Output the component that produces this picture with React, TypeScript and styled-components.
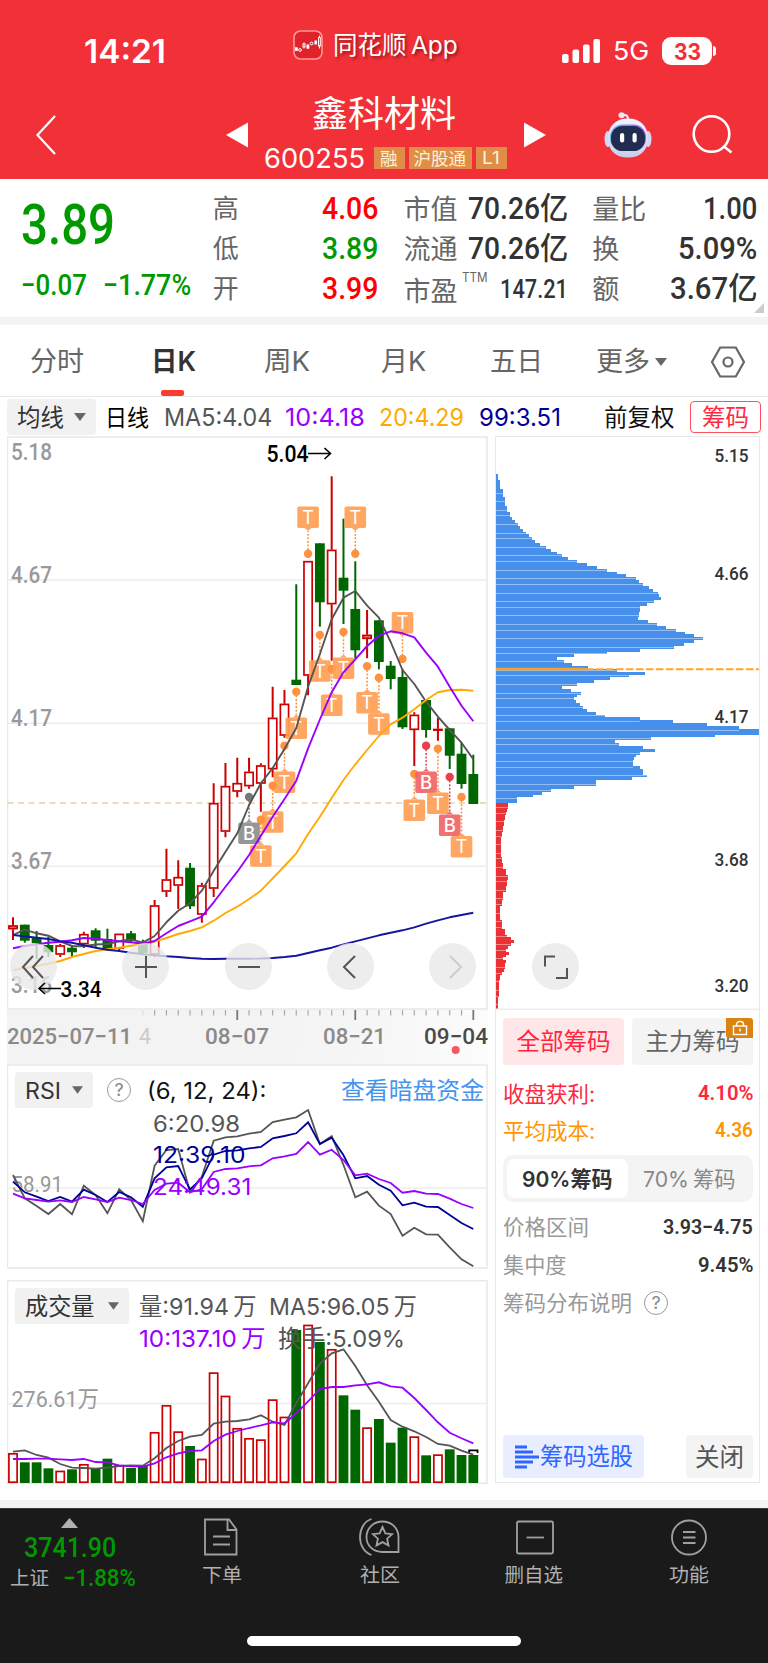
import React, { useLayoutEffect, useRef, useState } from 'react';
import styled, { createGlobalStyle } from 'styled-components';

const CJK = "'Noto Sans CJK SC', sans-serif";
const UI = `Inter, ${CJK}`;
const DIN = `Roboto, ${CJK}`;

const Global = createGlobalStyle`
  * { box-sizing: border-box; }
  body { margin: 0; background: #fff; font-family: ${UI}; }
  svg { display: block; flex: none; }
`;

/* ---------- text that keeps a fixed advance width ---------- */

const FitBox = styled.span<{ $w: number; $size: number; $color?: string; $weight?: number; $din?: boolean; $ml?: number; $dy?: number }>`
  display: block;
  flex: none;
  width: ${(p) => p.$w}px;
  height: ${(p) => Math.round(p.$size * 1.3)}px;
  line-height: ${(p) => Math.round(p.$size * 1.3)}px;
  font-size: ${(p) => p.$size}px;
  font-weight: ${(p) => p.$weight ?? 400};
  font-family: ${(p) => (p.$din ? DIN : UI)};
  color: ${(p) => p.$color ?? 'inherit'};
  margin-left: ${(p) => p.$ml ?? 0}px;
  margin-top: ${(p) => 2 * (p.$dy ?? 0)}px;
  white-space: nowrap;
`;
const FitInner = styled.span`
  display: inline-block;
  transform-origin: 0 50%;
`;

type FitProps = { w: number; size: number; color?: string; weight?: number; din?: boolean; ml?: number; dy?: number; children: React.ReactNode };

function Fit({ w, size, color, weight, din, ml, dy, children }: FitProps) {
  const ref = useRef<HTMLSpanElement>(null);
  const [scale, setScale] = useState(1);
  useLayoutEffect(() => {
    if (ref.current) setScale(w / ref.current.offsetWidth);
  }, [w, size]);
  return (
    <FitBox $w={w} $size={size} $color={color} $weight={weight} $din={din} $ml={ml} $dy={dy}>
      <FitInner ref={ref} style={{ transform: `scaleX(${scale})` }}>{children}</FitInner>
    </FitBox>
  );
}

/* ---------- header ---------- */

const Page = styled.div`
  width: 768px;
  height: 1663px;
  display: flex;
  flex-direction: column;
  background: #fff;
`;
const Header = styled.header`
  height: 179px;
  background: #f23038;
  color: #fff;
`;
const StatusBar = styled.div`
  height: 90px;
  display: flex;
  align-items: center;
  padding: 12px 0 0 84px;
`;
const AppTag = styled.div`
  display: flex;
  align-items: center;
  width: 168px;
  margin: -12px 101px 0 127px;
  gap: 10px;
  text-shadow: 2px 2px 3px rgba(90, 0, 0, 0.6);
`;
const Battery = styled.div`
  position: relative;
  width: 50px;
  height: 28px;
  margin-left: 13px;
  border-radius: 9px;
  background: #fff;
  color: #f23038;
  display: flex;
  align-items: center;
  justify-content: center;
  &::after {
    content: '';
    position: absolute;
    left: 51px;
    top: 9px;
    width: 3px;
    height: 10px;
    border-radius: 0 4px 4px 0;
    background: #fff;
  }
`;
const TitleBar = styled.div`
  height: 89px;
  display: flex;
  align-items: center;
  padding-left: 36px;
`;
const TitleNav = styled.div`
  display: flex;
  align-items: center;
  margin: 0 58px 0 170px;
`;
const Actions = styled.div`
  display: flex;
  align-items: center;
  gap: 40px;
`;
const TitleBlock = styled.div`
  width: 246px;
  margin: 0 16px 0 14px;
  display: flex;
  flex-direction: column;
  align-items: center;
`;
const CodeRow = styled.div`
  display: flex;
  align-items: center;
  height: 24px;
  margin: 3px 0 -3px;
  gap: 4px;
`;
const TitleText = styled.div`
  margin: -11px 2px 5px 0;
`;
const Code = styled.div`
  margin-right: 5px;
`;
const Badge = styled.span<{ $w: number }>`
  width: ${(p) => p.$w}px;
  height: 22px;
  display: flex;
  align-items: center;
  justify-content: center;
  background: #e08d47;
  color: #fff1d8;
`;

const AppIcon = () => (
  <svg width="30" height="30" viewBox="0 0 30 30">
    <rect x="1" y="1" width="28" height="28" rx="6.5" fill="#e0232b" stroke="#f99" strokeWidth="1.6" />
    <g stroke="#fff" strokeWidth="1" fill="none">
      <rect x="2.4" y="17.8" width="1.8" height="2.6" fill="#fff" /><circle cx="7" cy="20" r="1.4" /><path d="M11 12.500v1.500M11 17v1.500" />
      <rect x="10" y="14" width="2" height="3" /><rect x="14" y="15" width="1.800" height="3.2" fill="#fff" /><circle cx="18.600" cy="13.500" r="1.4" />
      <rect x="22" y="11" width="1.4" height="3" fill="#fff" /><rect x="25.500" y="7.500" width="1.800" height="8.500" /><path d="M26.500 5.500v2M26.500 16v2.500" />
    </g>
  </svg>
);
const Signal = () => (
  <svg width="38" height="24" viewBox="0 0 38 24" fill="#fff">
    <rect x="0" y="15" width="6.6" height="9" rx="2" /><rect x="10.5" y="10.5" width="6.6" height="13.5" rx="2" />
    <rect x="21" y="5.5" width="6.6" height="18.5" rx="2" /><rect x="31.4" y="0" width="6.6" height="24" rx="2" />
  </svg>
);
const BackIcon = () => (
  <svg width="20" height="40" viewBox="0 0 20 40" fill="none" stroke="#fff" strokeWidth="2.2"><path d="M19 1 1.5 20 19 39" /></svg>
);
const Arrow = ({ flip }: { flip?: boolean }) => (
  <svg width="22" height="26" viewBox="0 0 22 26" fill="#fff"><path d={flip ? 'M0 .5 22 13 0 25.5z' : 'M22 .5 0 13l22 12.5z'} /></svg>
);
const Robot = () => (
  <svg width="48" height="46" viewBox="0 0 48 46">
    <defs>
      <linearGradient id="shell" x1="0" y1="0" x2="0" y2="1"><stop offset="0" stopColor="#f3f4ff" /><stop offset="1" stopColor="#c9cdec" /></linearGradient>
      <linearGradient id="rim" x1="0" y1="0" x2="1" y2="0"><stop offset="0" stopColor="#62b8e8" /><stop offset="1" stopColor="#a25be8" /></linearGradient>
    </defs>
    <path d="M18 3c4-.6 6 .5 6 4" fill="none" stroke="#e4e5f8" strokeWidth="2.2" />
    <circle cx="17.5" cy="3.2" r="3" fill="#f4e3f0" />
    <ellipse cx="4" cy="27" rx="3.5" ry="8" fill="#d4d7f2" /><ellipse cx="44" cy="27" rx="3.5" ry="8" fill="#d4d7f2" />
    <path d="M24 6.500C36 6.500 44 14 44 26 44 38 37 45.500 24 45.500S4 38 4 26C4 14 12 6.500 24 6.500z" fill="url(#shell)" />
    <rect x="6" y="12.500" width="36" height="26.500" rx="12.500" fill="url(#rim)" />
    <rect x="7" y="14" width="34" height="25" rx="11.500" fill="#202d51" />
    <rect x="16" y="21" width="4.200" height="9.500" rx="2.100" fill="#fff" /><rect x="28.500" y="21" width="4.200" height="9.500" rx="2.100" fill="#fff" />
  </svg>
);
const SearchIcon = () => (
  <svg width="42" height="42" viewBox="0 0 42 42" fill="none" stroke="#fff" strokeWidth="2.600"><circle cx="19.500" cy="20" r="17.800" /><path d="m32 32.500 7.500 6" /></svg>
);

/* ---------- quote summary ---------- */

const Quote = styled.section`
  height: 138px;
  display: flex;
  padding: 10px 11px 0 21px;
  position: relative;
`;
const PriceCol = styled.div`
  width: 192px;
`;
const Changes = styled.div`
  display: flex;
  gap: 16px;
  margin-top: 5px;
`;
const StatCol = styled.div<{ $w: number; $ml?: number }>`
  width: ${(p) => p.$w}px;
  margin-left: ${(p) => p.$ml ?? 0}px;
`;
const StatRow = styled.div`
  height: 40px;
  display: flex;
  align-items: center;
  justify-content: space-between;
  color: #666;
`;
const Pair = styled.div`
  display: flex;
  align-items: center;
`;
const Corner = styled.svg`
  position: absolute;
  right: 4px;
  bottom: 4px;
`;
const Strip = styled.div`
  height: 8px;
  background: #f4f4f4;
`;

/* ---------- tabs and MA toolbar ---------- */

const Tabs = styled.nav`
  height: 72px;
  display: flex;
  align-items: center;
  padding: 2px 0 0 30px;
  border-bottom: 1px solid #eaeaea;
  color: #666;
`;
const Tab = styled.div<{ $ml?: number }>`
  position: relative;
  display: flex;
  margin-left: ${(p) => p.$ml ?? 0}px;
`;
const Underline = styled.i`
  position: absolute;
  left: 10px;
  top: 46px;
  width: 23px;
  height: 6px;
  border-radius: 2px;
  background: #ff3b30;
`;
const More = styled.div`
  display: flex;
  align-items: center;
  gap: 5px;
  margin: 0 43px 0 53px;
`;
const MaBar = styled.div`
  height: 39px;
  display: flex;
  align-items: center;
  padding: 1px 0 0 7px;
`;
const Chip = styled.div<{ $w: number }>`
  width: ${(p) => p.$w}px;
  height: 36px;
  flex: none;
  padding: 0 10px 0 10px;
  display: flex;
  align-items: center;
  justify-content: space-between;
  background: #f1f1f1;
  border-radius: 4px;
  color: #333;
`;
const OutlineBtn = styled.div`
  width: 71px;
  height: 32px;
  margin-left: 15px;
  display: flex;
  align-items: center;
  justify-content: center;
  border: 1.500px solid #ff5060;
  border-radius: 4px;
`;
const Caret = ({ w = 12 }: { w?: number }) => (
  <svg width={w} height="8" viewBox="0 0 12 8" fill="#666"><path d="M0 0h12L6 8z" /></svg>
);

/* ---------- chart area ---------- */

const Body = styled.main`
  height: 1064px;
  display: flex;
  gap: 7px;
  padding-left: 7px;
`;
const Left = styled.div`
  width: 481px;
  display: flex;
  flex-direction: column;
`;
const Panel = styled.section<{ $h: number; $mt?: number }>`
  position: relative;
  height: ${(p) => p.$h}px;
  margin-top: ${(p) => p.$mt ?? 0}px;
  flex: none;
`;
const Overlay = styled.div`
  position: absolute;
  left: 0;
  right: 0;
  top: 0;
  padding: 8px 0 0 8px;
`;
const Line = styled.div<{ $h?: number; $pl?: number }>`
  display: flex;
  align-items: center;
  height: ${(p) => p.$h ?? 36}px;
  padding-left: ${(p) => p.$pl ?? 0}px;
`;
const Axis = styled.div`
  height: 54px;
  background: linear-gradient(100deg, #f3f3f3 0 45%, #f5f5f5 70%, #fcfcfc 100%);
`;
const RoundRow = styled.div`
  position: absolute;
  left: 3px;
  top: 507px;
  display: flex;
`;
const Round = styled.div<{ $ml?: number }>`
  width: 47px;
  height: 47px;
  margin-left: ${(p) => p.$ml ?? 0}px;
  border-radius: 50%;
  display: flex;
  align-items: center;
  justify-content: center;
  background: rgba(232, 232, 232, 0.8);
`;
const Right = styled.aside`
  width: 265px;
  height: 1047px;
  display: flex;
  flex-direction: column;
  border: solid #e8e8e8;
  border-width: 1px 1px 1.500px 1px;
  position: relative;
`;

const X0 = 13;
const STEP = 11.803;
const cx = (i: number) => X0 + i * STEP;
const RED = '#cc0000';
const GREEN = '#006600';
const GREY = '#555';
const PURPLE = '#9900ff';
const AMBER = '#ffaa00';
const NAVY = '#000099';

const poly = (v: number[], f: (y: number) => number = (y) => y) =>
  v.map((y, i) => `${cx(i).toFixed(1)},${f(y).toFixed(1)}`).join(' ');

/* [rising, high, body top, body bottom, low] */
const CANDLES: [number, number, number, number, number][] = [
  [1, 917.3, 925.3, 929.3, 940], [0, 924.7, 924.7, 940.7, 942.7], [0, 931, 938, 943.5, 959], [0, 936.7, 945, 952.3, 957],
  [1, 944, 945.3, 954.7, 957], [0, 945.3, 947.7, 952.3, 957], [1, 931.7, 934, 944.3, 948], [0, 928.3, 930.3, 940.7, 947.7],
  [0, 928.7, 939, 949.3, 950.7], [1, 933.7, 933.7, 948.7, 950.7], [0, 931, 933.3, 940.7, 942.7], [0, 939.7, 942.7, 953, 955],
  [1, 900, 905.3, 954.7, 957], [1, 848.7, 879.3, 891.7, 897], [1, 860.3, 877, 885.7, 909], [0, 863, 867.7, 906.3, 909],
  [1, 882.7, 885.3, 914.7, 922.7], [1, 783.3, 803, 888.7, 897], [1, 763, 786, 831.7, 837.3], [1, 757.7, 783, 791.7, 797.3],
  [1, 757.7, 771.7, 786.3, 788.7], [1, 763.3, 765.3, 783.7, 811.7], [1, 686.7, 717.7, 769.3, 777.3], [1, 690, 703.7, 735.7, 737.7],
  [0, 584.3, 679.7, 685, 685], [1, 561, 561, 675.7, 695.3], [0, 543.3, 543.3, 602.3, 626.7], [1, 476.3, 549.7, 604.3, 660.7],
  [0, 518.7, 577.7, 590.7, 624], [0, 561.3, 609, 650.3, 658.3], [1, 610, 634.7, 639, 658.3], [0, 620.3, 620.3, 662, 669.3],
  [0, 661, 665.7, 679, 689.3], [0, 669, 677, 727.3, 729], [1, 712.3, 714.7, 730, 766], [0, 700, 700, 730, 737.7],
  [1, 717.7, 728.8, 729.8, 740.7], [0, 728.3, 728.3, 755.7, 769], [0, 742.7, 753.7, 784, 788.7], [0, 754.7, 774, 804, 804],
];
const MA5 = [935, 929.7, 933.3, 935.7, 941.3, 946, 946.3, 944.5, 944, 941.3, 939.3, 942.7, 936, 922.3, 910.7, 903.3, 890.7, 870.7, 851.7, 833.3, 805, 783.3, 768, 749, 728, 686.7, 654, 619.3, 597.7, 591, 605.7, 617.7, 642, 670, 684, 701.7, 716.7, 730, 742.7, 759.3];
const MA10 = [948.3, 946, 944.3, 942.7, 941.7, 940.3, 938, 938.7, 940, 941.3, 942.3, 943.7, 941, 933.3, 926, 921.3, 916.7, 902.3, 886.7, 871.7, 855, 835.7, 816.7, 799, 780.7, 748.3, 719.5, 692.3, 672.3, 659.3, 646, 635.7, 631.3, 633.3, 637.3, 652.7, 666.7, 686.7, 705.7, 721.3];
const MA20 = [970, 968, 966, 963.7, 961, 957, 954, 951, 949.3, 947.7, 945.7, 944, 941.7, 938, 934, 931, 927.3, 920.7, 913, 906.7, 899, 890.7, 878.3, 866, 853.3, 834, 816.7, 798, 780, 764.3, 750, 736, 724.3, 717.7, 709.3, 700, 692.3, 690, 689.7, 690.7];
const MA99 = [935, 936.3, 937.7, 939, 941.3, 942.7, 945.3, 947.7, 949.7, 951, 952.7, 954.3, 955.3, 956.3, 957, 958, 958.7, 959, 958.7, 958.7, 958.7, 958.5, 958, 957, 955.7, 953, 950.3, 947.7, 944.3, 941.3, 938.3, 935.3, 932.7, 930.3, 927.3, 923.7, 920.3, 917.3, 915, 912.7];

/* [candle index, dot y, box centre y, letter, tone] */
const MARKS: [number, number, number, string, 'o' | 'r' | 'g'][] = [
  [25, 553.7, 517.3, 'T', 'o'], [29, 553.7, 517.3, 'T', 'o'], [26, 635, 671, 'T', 'o'], [27, 669, 705.3, 'T', 'o'], [28, 632, 668.3, 'T', 'o'],
  [30, 666.3, 702.7, 'T', 'o'], [31, 677.7, 724, 'T', 'o'], [33, 659, 622.7, 'T', 'o'], [24, 691.7, 728.3, 'T', 'o'],
  [23, 745.7, 782.3, 'T', 'o'], [22, 785.7, 822, 'T', 'o'], [21, 819.7, 856, 'T', 'o'], [20, 797, 833.3, 'B', 'g'],
  [34, 774, 810.3, 'T', 'o'], [35, 745.7, 782.3, 'B', 'r'], [36, 748.7, 803.3, 'T', 'o'], [37, 777, 825.3, 'B', 'r'], [38, 797, 846.7, 'T', 'o'],
];
const TONES = { o: ['#ff923e', '#ffa055'], r: ['#e9404f', '#f06468'], g: ['#777', '#8e8e8e'] };

type TProps = { x: number; y: number; w: number; size: number; fill: string; weight?: number; children: string };
const T = ({ x, y, w, size, fill, weight = 400, children }: TProps) => (
  <text x={x} y={y} fontFamily={DIN} fontSize={size} fontWeight={weight} fill={fill} textLength={w} lengthAdjust="spacingAndGlyphs">{children}</text>
);

function Kline() {
  return (
    <svg width="481" height="574" viewBox="7 436 481 574">
      <rect x="7.500" y="437" width="479.500" height="572" fill="#fff" stroke="#e9e9e9" strokeWidth="1.600" />
      {[580, 723.3, 866.3].map((y) => <path key={y} d={`M8 ${y}H486`} stroke="#ededed" strokeWidth="1.400" />)}
      <path d="M7.500 803H486" stroke="#e6cdaa" strokeWidth="1.400" strokeDasharray="6 4.500" />
      <T x={11} y={460} w={41} size={23.500} fill="#999" weight={500}>5.18</T>
      <T x={11} y={583} w={41} size={23.500} fill="#999" weight={500}>4.67</T>
      <T x={11} y={726} w={41} size={23.500} fill="#999" weight={500}>4.17</T>
      <T x={11} y={869} w={41} size={23.500} fill="#999" weight={500}>3.67</T>
      <T x={11} y={993} w={41} size={23.500} fill="#999" weight={500}>3.16</T>
      {CANDLES.map(([up, h, t, b, l], i) => {
        const x = cx(i);
        const c = up ? RED : GREEN;
        return (
          <g key={i} stroke={c}>
            <path d={up ? `M${x} ${h}V${t}M${x} ${b}V${l}` : `M${x} ${h}V${l}`} strokeWidth="2" />
            {up ? <rect x={x - 4.1} y={t + 0.7} width="8.200" height={Math.max(b - t - 1.4, 0.6)} fill={i === 0 || i === 30 ? '#e88' : '#fff'} strokeWidth="1.700" />
              : <rect x={x - 4.9} y={t} width="9.800" height={b - t} fill={c} stroke="none" />}
          </g>
        );
      })}
      {MARKS.map(([i, dot, box, s, tone]) => {
        const x = cx(i);
        const above = box < dot;
        const edge = above ? box + 10.7 : box - 10.7;
        const tip = above ? edge + 3 : edge - 3;
        const [d, f] = TONES[tone];
        return (
          <g key={i}>
            <path d={`M${x} ${dot}V${tip}`} stroke={d} strokeWidth="1.500" strokeDasharray="2 1.600" />
            <circle cx={x} cy={dot} r="4.200" fill={d} />
            <g opacity=".92">
              <rect x={x - 10.8} y={box - 10.8} width="21.600" height="21.600" rx="1.800" fill={f} />
              <path d={`M${x - 3.500} ${edge}L${x} ${tip}L${x + 3.500} ${edge}z`} fill={f} />
            </g>
            <text x={x} y={box + 6.6} textAnchor="middle" fontFamily={UI} fontSize="18.500" fill="#fff" fontWeight={s === 'B' ? 500 : 400}>{s}</text>
          </g>
        );
      })}
      <g fill="none" strokeWidth="1.900" strokeLinejoin="round">
        <polyline points={poly(MA5)} stroke={GREY} />
        <polyline points={poly(MA20)} stroke={AMBER} />
        <polyline points={poly(MA10)} stroke={PURPLE} />
        <polyline points={poly(MA99)} stroke="#1515a0" />
      </g>
      <T x={266.500} y={462} w={42} size={24} fill="#000" weight={500}>5.04</T>
      <path d="M308 453.500H330M324.500 448l6 5.500-6 5.500" fill="none" stroke="#000" strokeWidth="1.600" />
    </svg>
  );
}

function AxisTicks() {
  return (
    <svg width="481" height="54" viewBox="7 1010 481 54">
      {Array.from({ length: 29 }, (_, k) => k + 11).map((i) => {
        const major = i === 19 || i === 29 || i === 39;
        return <path key={i} d={`M${cx(i)} 1010v${major ? 10 : 5.500}`} stroke={major ? '#777' : '#aaa'} strokeWidth={major ? 1.8 : 1.2} opacity={i === 11 ? 0.3 : 1} />;
      })}
      <T x={7} y={1044} w={125} size={22.500} fill="#8a8a8a" weight={500}>2025−07−11</T>
      <T x={139} y={1044} w={12} size={22.500} fill="#ccc">4</T>
      <T x={205} y={1044} w={64} size={22.500} fill="#8a8a8a" weight={500}>08−07</T>
      <T x={323} y={1044} w={63} size={22.500} fill="#8a8a8a" weight={500}>08−21</T>
      <T x={424} y={1044} w={64} size={22.500} fill="#4a4a4a" weight={500}>09−04</T>
      <circle cx="455.700" cy="1050" r="4" fill="#f25a5e" />
    </svg>
  );
}

/* RSI values, in thirds of a pixel below the top of the scale */
const RSI6 = [375, 445, 468, 492, 462, 493, 407, 435, 490, 418, 450, 514, 347, 300, 297, 427, 380, 272, 262, 259, 251, 246, 216, 209, 202, 180, 282, 258, 345, 442, 425, 467, 492, 557, 533, 553, 554, 592, 628, 649];
const RSI12 = [395, 427, 440, 453, 441, 455, 419, 435, 456, 426, 442, 470, 385, 352, 348, 418, 385, 314, 303, 301, 295, 291, 265, 258, 250, 217, 282, 263, 316, 385, 378, 404, 422, 466, 458, 470, 471, 495, 519, 537];
const RSI24 = [431, 445, 450, 455, 451, 456, 441, 448, 456, 443, 450, 462, 420, 401, 398, 427, 418, 366, 357, 355, 349, 346, 325, 319, 312, 276, 314, 299, 330, 376, 371, 387, 399, 428, 423, 431, 432, 446, 462, 474];

function RsiChart() {
  const f = (y: number) => 1050 + y / 3;
  return (
    <svg width="481" height="205" viewBox="7 1064 481 205">
      <rect x="7.500" y="1065" width="479.500" height="203" fill="#fff" stroke="#e9e9e9" strokeWidth="1.600" />
      <path d="M8 1188H486" stroke="#ededed" strokeWidth="1.400" />
      <T x={11.500} y={1191.500} w={51.500} size={22.500} fill="#999">58.91</T>
      <g fill="none" strokeWidth="1.800">
        <polyline points={poly(RSI6, f)} stroke={GREY} />
        <polyline points={poly(RSI12, f)} stroke={NAVY} />
        <polyline points={poly(RSI24, f)} stroke={PURPLE} />
      </g>
    </svg>
  );
}

const VOL: [number, number][] = [
  [1, 549], [0, 577], [0, 577], [0, 595], [1, 602], [0, 598], [1, 582], [0, 594], [0, 566], [1, 585], [0, 594], [0, 586], [1, 486], [1, 405],
  [1, 484], [0, 528], [1, 566], [1, 307], [1, 377], [1, 474], [1, 504], [1, 508], [1, 388], [1, 440], [0, 180], [1, 164], [0, 216], [1, 237],
  [0, 376], [0, 419], [1, 472], [0, 447], [0, 518], [0, 473], [1, 499], [0, 556], [1, 553], [0, 538], [0, 555], [0, 555],
];
const V5 = [545, 541, 555, 563, 582, 593, 594, 596, 593, 588, 586, 587, 565, 534, 513, 500, 495, 461, 455, 453, 448, 436, 455, 465, 400, 340, 281, 250, 238, 288, 346, 395, 450, 470, 484, 501, 522, 527, 542, 554];
const V10 = [567, 567, 566, 566, 568, 570, 567, 576, 577, 586, 589, 590, 580, 562, 550, 543, 541, 513, 494, 483, 474, 466, 457, 460, 430, 394, 357, 351, 351, 346, 343, 337, 349, 353, 384, 420, 457, 488, 505, 520];

function VolumeChart() {
  const f = (y: number) => 1270 + y / 3;
  return (
    <svg width="481" height="204" viewBox="7 1280 481 204">
      <rect x="7.500" y="1280.700" width="479.500" height="202.500" fill="#fff" stroke="#e9e9e9" strokeWidth="1.600" />
      <path d="M8 1403.500H486" stroke="#ededed" strokeWidth="1.400" />
      <T x={11.500} y={1406.500} w={87.500} size={22.500} fill="#999">276.61万</T>
      {VOL.map(([up, v], i) => {
        const x = cx(i);
        const t = f(v);
        return up ? <rect key={i} x={x - 4.1} y={t + 0.8} width="8.200" height={1482.2 - t - 0.8} fill="#fff" stroke={RED} strokeWidth="1.700" />
          : <rect key={i} x={x - 4.9} y={t} width="9.800" height={1483 - t} fill={GREEN} />;
      })}
      <path d="M469.200 1453v-2.700h8.300v2.700" fill="none" stroke="#000" strokeWidth="1.800" />
      <g fill="none" strokeWidth="1.800">
        <polyline points={poly(V5, f)} stroke={GREY} />
        <polyline points={poly(V10, f)} stroke={PURPLE} />
      </g>
    </svg>
  );
}

/* cost distribution outline: [depth, extent], three units per pixel */
const CHIPS: [number, number][] = [
  [137, 29], [146, 31], [163, 36], [189, 44], [214, 50], [240, 58], [258, 65], [266, 73], [275, 81], [284, 90], [292, 97], [300, 106], [309, 114], [318, 123], [327, 131],
  [336, 140], [344, 157], [352, 173], [361, 189], [369, 206], [378, 222], [387, 240], [395, 268], [404, 297], [412, 326], [421, 356], [430, 386], [438, 415], [447, 445],
  [456, 452], [464, 466], [473, 482], [481, 496], [490, 509], [499, 514], [508, 520], [516, 498], [525, 477], [533, 455], [559, 453], [569, 451], [576, 479], [585, 507],
  [594, 535], [602, 563], [612, 590], [621, 617], [630, 646], [638, 617], [646, 587], [655, 557], [663, 457], [672, 358], [681, 257], [690, 207], [699, 228], [707, 252],
  [716, 300], [724, 386], [733, 472], [741, 422], [750, 367], [759, 317], [767, 268], [776, 222], [784, 249], [794, 279], [802, 268], [810, 257], [818, 265], [827, 275],
  [836, 286], [845, 296], [853, 323], [862, 352], [871, 455], [879, 556], [888, 656], [896, 754], [906, 815], [915, 680], [923, 490], [932, 380], [941, 392], [949, 428],
  [957, 464], [966, 502], [974, 457], [983, 444], [991, 438], [1000, 435], [1009, 435], [1017, 455], [1026, 466], [1035, 477], [1043, 432], [1052, 380], [1060, 325],
  [1070, 258], [1078, 190], [1086, 163], [1095, 135], [1103, 108], [1112, 87], [1121, 61], [1129, 59], [1138, 56], [1147, 53], [1160, 52], [1186, 49], [1195, 45],
  [1212, 41], [1240, 38], [1270, 38], [1290, 41], [1310, 46], [1330, 54], [1344, 61], [1358, 58], [1380, 53], [1400, 44], [1420, 41], [1438, 36], [1460, 37], [1490, 41],
  [1507, 50], [1516, 58], [1524, 68], [1534, 77], [1542, 68], [1551, 59], [1560, 55], [1568, 62], [1577, 54], [1586, 46], [1594, 53], [1607, 52], [1620, 48], [1630, 41],
  [1640, 36], [1660, 34], [1690, 32], [1720, 30], [1740, 29],
];
const PITCH = 8.575;
const extentAt = (y: number) => {
  let best = CHIPS[0];
  for (const c of CHIPS) if (Math.abs(c[0] - y) < Math.abs(best[0] - y)) best = c;
  return best[1];
};

function Distribution() {
  const rows = Array.from({ length: 187 }, (_, k) => k - 6);
  return (
    <svg width="263" height="573" viewBox="496 437 263 573">
      <g shapeRendering="crispEdges">
        {rows.map((k) => {
          const y = 189 + k * PITCH;
          const w = (extentAt(y + 1) - 24) / 3;
          const py = 430 + (y - PITCH / 2) / 3;
          return <rect key={k} x="496" y={py} width={w} height={PITCH / 3} fill={y < 1117 ? '#4690ec' : '#ea3236'} />;
        })}
      </g>
      {rows.filter((k) => k >= 0 && [0, 3, 6].includes(k % 8)).map((k) => {
        const y = 189 + k * PITCH;
        return <rect key={k} x="496" y={Math.round(430 + y / 3 - 0.5)} width={(extentAt(y) - 24) / 3} height="1" fill="#fff" opacity=".42" />;
      })}
      <path d="M496 669H586" stroke="#ff9f1f" strokeWidth="2.400" />
      <path d="M586 669.300H759" stroke="#ffa528" strokeWidth="2" strokeDasharray="7.500 2.500" />
      <T x={714.500} y={462.200} w={34} size={19} fill="#333" weight={500}>5.15</T>
      <T x={714.500} y={579.700} w={34} size={19} fill="#333" weight={500}>4.66</T>
      <T x={714.500} y={723.300} w={34} size={19} fill="#333" weight={500}>4.17</T>
      <T x={714.500} y={866.300} w={34} size={19} fill="#333" weight={500}>3.68</T>
      <T x={714.500} y={991.700} w={34} size={19} fill="#333" weight={500}>3.20</T>
      <path d="M496 1009.300H759" stroke="#ededed" strokeWidth="1.400" />
    </svg>
  );
}

const Glyph = ({ d, dim }: { d: string; dim?: boolean }) => (
  <svg width="26" height="26" viewBox="0 0 26 26" fill="none" stroke={dim ? '#ccc' : '#555'} strokeWidth="2"><path d={d} /></svg>
);
const Floating = styled.div`
  position: absolute;
  left: 36px;
  top: 506px;
`;
const LowTag = styled.svg`
  position: absolute;
  left: 30px;
  top: 540px;
`;
const Help = styled.span<{ $ml: number }>`
  width: 24px;
  height: 24px;
  flex: none;
  margin-left: ${(p) => p.$ml}px;
  border: 1.600px solid #999;
  border-radius: 50%;
  display: flex;
  align-items: center;
  justify-content: center;
  font: 500 17.5px/1 ${UI};
  color: #909090;
`;

/* ---------- side panel ---------- */

const Side = styled.div`
  flex: 1;
  display: flex;
  flex-direction: column;
  padding: 8px 6px 4px 7px;
`;
const Row = styled.div<{ $h: number; $mt?: number }>`
  display: flex;
  align-items: center;
  justify-content: space-between;
  height: ${(p) => p.$h}px;
  margin-top: ${(p) => p.$mt ?? 0}px;
`;
const BottomRow = styled(Row)`
  margin-top: auto;
`;
const Btn = styled.div<{ $w: number; $h: number; $bg: string }>`
  position: relative;
  width: ${(p) => p.$w}px;
  height: ${(p) => p.$h}px;
  display: flex;
  align-items: center;
  justify-content: center;
  gap: 1px;
  border-radius: 4px;
  background: ${(p) => p.$bg};
`;
const LockBadge = styled.span`
  position: absolute;
  right: 0;
  top: 0;
  width: 27px;
  height: 20px;
  border-radius: 0 3px 0 3px;
  background: #db820f;
  display: flex;
  align-items: center;
  justify-content: center;
`;
const Segment = styled.div`
  height: 47px;
  margin-top: 6px;
  padding: 4px;
  display: flex;
  border-radius: 10px;
  background: #f4f4f4;
`;
const SegItem = styled.div<{ $on?: boolean }>`
  width: 121px;
  height: 39px;
  display: flex;
  align-items: center;
  justify-content: center;
  border-radius: 8px;
  background: ${(p) => (p.$on ? '#fff' : 'transparent')};
`;

/* ---------- bottom bar ---------- */

const Footer = styled.footer`
  height: 155px;
  background: #1a1a1a;
  border-top: 1px solid #3c3c3c;
  display: flex;
  flex-direction: column;
`;
const FootRow = styled.div`
  height: 127px;
  display: flex;
`;
const Index = styled.div`
  width: 139px;
  padding-top: 9px;
  display: flex;
  flex-direction: column;
  align-items: center;
  gap: 2px;
  color: #b0b0b0;
`;
const IndexRow = styled.div`
  display: flex;
  align-items: center;
  gap: 14px;
  margin: -5px 0 0 7px;
`;
const NavItem = styled.div<{ $w: number; $ml: number }>`
  width: ${(p) => p.$w}px;
  margin-left: ${(p) => p.$ml}px;
  padding-top: 9px;
  display: flex;
  flex-direction: column;
  align-items: center;
  gap: 7px;
  color: #b0b0b0;
`;
const HomeBar = styled.div`
  width: 274px;
  height: 10px;
  margin: 0 auto;
  border-radius: 5px;
  background: #fff;
`;
const NavIcon = ({ children }: { children: React.ReactNode }) => (
  <svg width="42" height="38" viewBox="0 0 42 38" fill="none" stroke="#a0a0a0" strokeWidth="1.800">{children}</svg>
);

const K = '#333';
const G = '#009900';
const R = '#ff0000';

export default function App() {
  return (
    <Page>
      <Global />
      <Header>
        <StatusBar>
          <Fit w={82} size={33} weight={600}>14:21</Fit>
          <AppTag><AppIcon /><Fit w={125} size={24.500}>同花顺{'\u2009'}App</Fit></AppTag>
          <Signal />
          <Fit w={36} size={26} ml={13}>5G</Fit>
          <Battery><Fit w={27} size={22.500} weight={700}>33</Fit></Battery>
        </StatusBar>
        <TitleBar>
          <BackIcon />
          <TitleNav>
            <Arrow />
            <TitleBlock>
              <TitleText><Fit w={144} size={36}>鑫科材料</Fit></TitleText>
              <CodeRow>
                <Code><Fit w={101} size={27}>600255</Fit></Code>
                <Badge $w={31}><Fit w={18} size={17.500}>融</Fit></Badge>
                <Badge $w={63}><Fit w={53} size={17.500}>沪股通</Fit></Badge>
                <Badge $w={31}><Fit w={18} size={17}>L1</Fit></Badge>
              </CodeRow>
            </TitleBlock>
            <Arrow flip />
          </TitleNav>
          <Actions><Robot /><SearchIcon /></Actions>
        </TitleBar>
      </Header>

      <Quote>
        <PriceCol>
          <Fit w={94} size={55} color={G} weight={500} din>3.89</Fit>
          <Changes>
            <Fit w={66} size={29} color={G} weight={500} din>−0.07</Fit>
            <Fit w={88} size={29} color={G} weight={500} din>−1.77%</Fit>
          </Changes>
        </PriceCol>
        <StatCol $w={166}>
          {([['高', '4.06', R], ['低', '3.89', G], ['开', '3.99', R]] as const).map(([a, b, c]) => (
            <StatRow key={a}><Fit w={26} size={26}>{a}</Fit><Fit w={56} size={31} color={c} weight={500} din>{b}</Fit></StatRow>
          ))}
        </StatCol>
        <StatCol $w={165} $ml={25}>
          <StatRow><Fit w={54} size={27}>市值</Fit><Fit w={100} size={30.500} color={K} weight={500} din>70.26亿</Fit></StatRow>
          <StatRow><Fit w={54} size={27}>流通</Fit><Fit w={100} size={30.500} color={K} weight={500} din>70.26亿</Fit></StatRow>
          <StatRow>
            <Pair><Fit w={54} size={27} dy={2}>市盈</Fit><Fit w={26} size={13} ml={5} dy={-12}>TTM</Fit></Pair>
            <Fit w={68} size={25} color={K} weight={500} din>147.21</Fit>
          </StatRow>
        </StatCol>
        <StatCol $w={165} $ml={24}>
          <StatRow><Fit w={54} size={27}>量比</Fit><Fit w={54} size={31} color={K} weight={500} din>1.00</Fit></StatRow>
          <StatRow><Fit w={27} size={27}>换</Fit><Fit w={79} size={31} color={K} weight={500} din>5.09%</Fit></StatRow>
          <StatRow><Fit w={27} size={27}>额</Fit><Fit w={87} size={31} color={K} weight={500} din>3.67亿</Fit></StatRow>
        </StatCol>
        <Corner width="10" height="10" viewBox="0 0 10 10" fill="#ccc"><path d="M10 0v10H0z" /></Corner>
      </Quote>
      <Strip />

      <Tabs>
        <Tab><Fit w={54} size={27}>分时</Fit></Tab>
        <Tab $ml={67}><Fit w={45} size={27} weight={600} color={K}>日K</Fit><Underline /></Tab>
        <Tab $ml={68}><Fit w={46} size={27}>周K</Fit></Tab>
        <Tab $ml={71}><Fit w={45} size={27}>月K</Fit></Tab>
        <Tab $ml={64}><Fit w={53} size={27}>五日</Fit></Tab>
        <More><Fit w={54} size={27}>更多</Fit><Caret /></More>
        <svg width="36" height="32" viewBox="0 0 36 32" fill="none" stroke="#666" strokeWidth="2.200">
          <path d="M10.200 1.500h15.600l8.200 14.500-8.200 14.500H10.200L2 16z" /><circle cx="18" cy="16" r="4.500" />
        </svg>
      </Tabs>

      <MaBar>
        <Chip $w={89}><Fit w={47} size={23.500}>均线</Fit><Caret /></Chip>
        <Fit w={44} size={22.500} color="#000" ml={9}>日线</Fit>
        <Fit w={108} size={24} color={GREY} ml={15}>MA5:4.04</Fit>
        <Fit w={80} size={24} color={PURPLE} ml={13}>10:4.18</Fit>
        <Fit w={85} size={24} color={AMBER} ml={14}>20:4.29</Fit>
        <Fit w={82} size={24} color={NAVY} ml={15}>99:3.51</Fit>
        <Fit w={71} size={23.500} color="#111" ml={43}>前复权</Fit>
        <OutlineBtn><Fit w={47} size={23.500} color="#ff2a3f">筹码</Fit></OutlineBtn>
      </MaBar>

      <Body>
        <Left>
          <Panel $h={574}>
            <Kline />
            <RoundRow>
              <Round><Glyph d="M12 2 2 13l10 11M22 2 12 13l10 11" /></Round>
              <Round $ml={65}><Glyph d="M13 2v22M2 13h22" /></Round>
              <Round $ml={56}><Glyph d="M2 13h22" /></Round>
              <Round $ml={55}><Glyph d="M17 2 6 13l11 11" /></Round>
              <Round $ml={55}><Glyph d="M10 2l11 11-11 11" dim /></Round>
            </RoundRow>
            <LowTag width="70" height="28" viewBox="37 976 70 28">
              <path d="M61 988.500H39M45 983l-6 5.500 6 5.500" fill="none" stroke="#000" strokeWidth="1.600" />
              <T x={60.500} y={996.500} w={41} size={22.500} fill="#000" weight={500}>3.34</T>
            </LowTag>
          </Panel>
          <Axis><AxisTicks /></Axis>
          <Panel $h={205}>
            <RsiChart />
            <Overlay>
              <Line>
                <Chip $w={78}><Fit w={36} size={22.500}>RSI</Fit><Caret w={11} /></Chip>
                <Help $ml={14}>?</Help>
                <Fit w={120} size={22.500} color="#111" ml={16}>(6, 12, 24):</Fit>
                <Fit w={143} size={23.500} color="#4794ee" ml={74}>查看暗盘资金</Fit>
              </Line>
              <Line $h={30} $pl={138}><Fit w={87} size={22.500} color={GREY}>6:20.98</Fit></Line>
              <Line $h={32} $pl={138}><Fit w={93} size={22.500} color={NAVY}>12:39.10</Fit></Line>
              <Line $h={32} $pl={138}><Fit w={98} size={22.500} color={PURPLE}>24:49.31</Fit></Line>
            </Overlay>
          </Panel>
          <Panel $h={204} $mt={11}>
            <VolumeChart />
            <Overlay>
              <Line>
                <Chip $w={114}><Fit w={70} size={23.500}>成交量</Fit><Caret w={11} /></Chip>
                <Fit w={118} size={23.500} color={GREY} ml={10}>量:91.94{'\u2009'}万</Fit>
                <Fit w={148} size={23.500} color={GREY} ml={12}>MA5:96.05{'\u2009'}万</Fit>
              </Line>
              <Line $h={28} $pl={124}>
                <Fit w={127} size={23.500} color={PURPLE}>10:137.10{'\u2009'}万</Fit>
                <Fit w={127} size={23.500} color={GREY} ml={12}>换手:5.09%</Fit>
              </Line>
            </Overlay>
          </Panel>
        </Left>

        <Right>
          <Distribution />
          <Floating><Round><Glyph d="M2 12.500V2.500h10M24 14v10H13" /></Round></Floating>
          <Side>
            <Row $h={47}>
              <Btn $w={121} $h={47} $bg="#ffe6e9"><Fit w={94} size={23.500} color="#ff2540">全部筹码</Fit></Btn>
              <Btn $w={121} $h={47} $bg="#f4f4f4">
                <Fit w={94} size={23.500} color="#666">主力筹码</Fit>
                <LockBadge>
                  <svg width="16" height="16" viewBox="0 0 16 16" fill="none" stroke="#fff" strokeWidth="1.400"><rect x="1.500" y="6" width="13" height="8.500" /><path d="M4.500 6V4.500A3 3 0 0 1 7.500 1.500h1a3 3 0 0 1 3 3V6M8 8.500v3" /></svg>
                </LockBadge>
              </Btn>
            </Row>
            <Row $h={37} $mt={10}><Fit w={92} size={21.500} color="#ff2540">收盘获利:</Fit><Fit w={55} size={21} weight={600} color="#ff2540" din>4.10%</Fit></Row>
            <Row $h={37}><Fit w={92} size={21.500} color="#ff9500">平均成本:</Fit><Fit w={38} size={21} weight={600} color="#ff9500" din>4.36</Fit></Row>
            <Segment>
              <SegItem $on><Fit w={91} size={21.500} weight={600} color={K}>90%筹码</Fit></SegItem>
              <SegItem><Fit w={92} size={21.500} color="#888">70%{'\u2009'}筹码</Fit></SegItem>
            </Segment>
            <Row $h={38} $mt={6}><Fit w={86} size={21.500} color="#999">价格区间</Fit><Fit w={90} size={21} weight={600} color={K} din>3.93−4.75</Fit></Row>
            <Row $h={38}><Fit w={64} size={21.500} color="#999">集中度</Fit><Fit w={55} size={21} weight={600} color={K} din>9.45%</Fit></Row>
            <Row $h={38}><Pair><Fit w={129} size={21.500} color="#999">筹码分布说明</Fit><Help $ml={12}>?</Help></Pair></Row>
            <BottomRow $h={43}>
              <Btn $w={141} $h={43} $bg="#e8edff">
                <svg width="25" height="26" viewBox="0 0 25 26" stroke="#2e66ff" strokeWidth="2.800"><path d="M1 3h12M1 8h18M1 13h24M1 18h18M1 23h12" /></svg>
                <Fit w={93} size={23.500} color="#2e66ff">筹码选股</Fit>
              </Btn>
              <Btn $w={67} $h={43} $bg="#f4f4f4"><Fit w={49} size={24.500} color="#555">关闭</Fit></Btn>
            </BottomRow>
          </Side>
        </Right>
      </Body>
      <Strip />

      <Footer>
        <FootRow>
          <Index>
            <svg width="17" height="10" viewBox="0 0 17 10" fill="#b0b0b0"><path d="M8.500 0 17 10H0z" /></svg>
            <Fit w={92} size={28} weight={500} color={G} din>3741.90</Fit>
            <IndexRow><Fit w={39} size={19.500}>上证</Fit><Fit w={73} size={24} weight={500} color={G} din>−1.88%</Fit></IndexRow>
          </Index>
          <NavItem $w={60} $ml={53}>
            <NavIcon><path d="M6 1.500h22l7.500 10V36.500H4V1.500zM26.500 1.500v10.500h9M12 18.500h17M12 26.500h17" /></NavIcon>
            <Fit w={40} size={19.500}>下单</Fit>
          </NavItem>
          <NavItem $w={60} $ml={98}>
            <NavIcon><path d="M12.500 1C5 3.500 1 11 1 19s4 15.500 11.500 18M39.500 34V19C39.500 10.500 33 3.500 23.500 3.500S7.500 10.500 7.500 19 14 34 23.500 34h16zM23.500 9l2.900 6.300 6.700.8-5 4.600 1.400 6.700-6-3.300-6 3.300 1.400-6.700-5-4.600 6.700-.8z" /></NavIcon>
            <Fit w={40} size={19.500}>社区</Fit>
          </NavItem>
          <NavItem $w={60} $ml={94}>
            <NavIcon><rect x="4" y="3.500" width="36" height="32" rx="1.500" /><path d="M13.500 19.500h17.500" /></NavIcon>
            <Fit w={59} size={19.500}>删自选</Fit>
          </NavItem>
          <NavItem $w={60} $ml={95}>
            <NavIcon><circle cx="21" cy="19.500" r="17" /><path d="M15 14h12.500M15 19.500h12.500M15 25h12.500" /></NavIcon>
            <Fit w={40} size={19.500}>功能</Fit>
          </NavItem>
        </FootRow>
        <HomeBar />
      </Footer>
    </Page>
  );
}
